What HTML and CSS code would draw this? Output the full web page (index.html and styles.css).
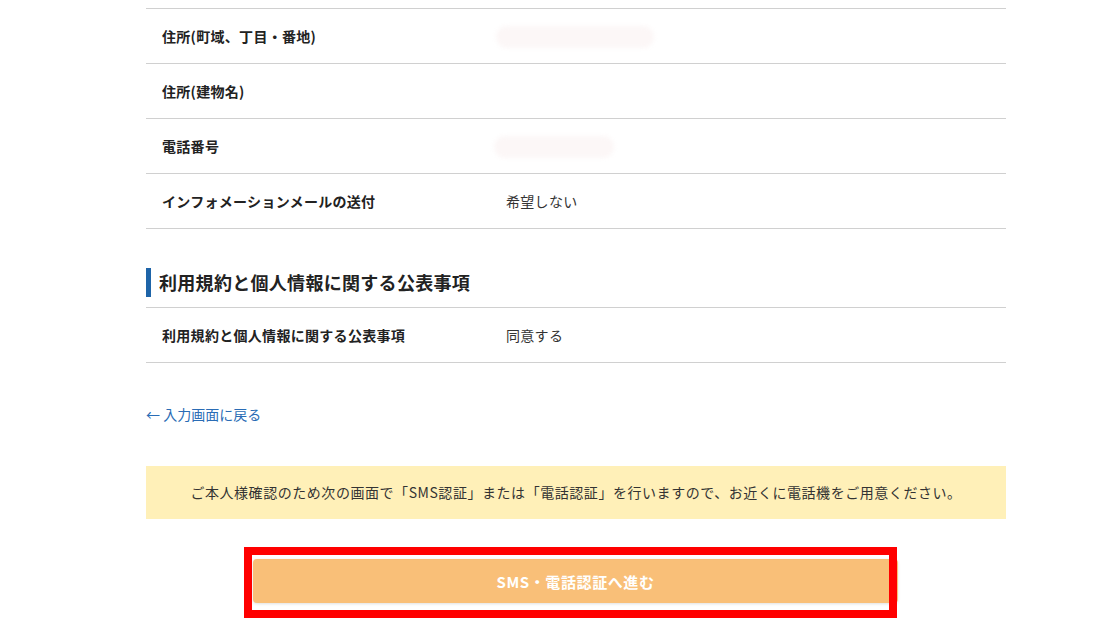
FILE: index.html
```html
<!DOCTYPE html>
<html lang="ja">
<head>
  <meta charset="UTF-8" />
  <meta name="viewport" content="width=device-width, initial-scale=1.0"/>
  <title>お申し込み内容の確認</title>
  <link rel="stylesheet" href="styles.css">
</head>
<body>
  <main class="page">
    <div class="confirm-table">
      <div class="row">
        <div class="label">住所(町域、丁目・番地)</div>
        <div class="value"><span class="masked masked-long"></span></div>
      </div>
      <div class="row">
        <div class="label">住所(建物名)</div>
        <div class="value"></div>
      </div>
      <div class="row">
        <div class="label">電話番号</div>
        <div class="value"><span class="masked masked-short"></span></div>
      </div>
      <div class="row">
        <div class="label">インフォメーションメールの送付</div>
        <div class="value">希望しない</div>
      </div>
    </div>

    <h2 class="section-title">利用規約と個人情報に関する公表事項</h2>
    <div class="confirm-table">
      <div class="row">
        <div class="label">利用規約と個人情報に関する公表事項</div>
        <div class="value">同意する</div>
      </div>
    </div>

    <a class="back-link" href="#">← 入力画面に戻る</a>

    <p class="notice">ご本人様確認のため次の画面で「SMS認証」または「電話認証」を行いますので、お近くに電話機をご用意ください。</p>

    <div class="submit-area">
      <div class="highlight">
        <button class="submit-btn" type="button">SMS・電話認証へ進む</button>
      </div>
    </div>
  </main>
</body>
</html>
```

FILE: styles.css
```css
* {
  margin: 0; padding: 0; box-sizing: border-box;
}
body {
  background: #fff;
  color: #333;
  font-family: Meiryo, "Noto Sans CJK JP", "Noto Sans", sans-serif;
  font-size: 14px;
  overflow: hidden;
}
.page {
  width: 860px;
  margin-left: 146px;
  padding-top: 8px;
}
.confirm-table {
  border-top: 1px solid #d0d0d0;
}
.row {
  display: flex;
  align-items: center;
  height: 55px;
  border-bottom: 1px solid #d0d0d0;
}
.label {
  width: 360px;
  padding-left: 16px;
  font-weight: bold;
  color: #222;
  letter-spacing: 0.3px;
}
.value {
  color: #333;
  letter-spacing: 0.3px;
}
.masked {
  display: inline-block;
  height: 22px;
  border-radius: 11px;
  background: #fcf7f7;
  filter: blur(2px);
  vertical-align: middle;
}
.masked-long {
  width: 158px;
  margin-left: -10px;
}
.masked-short {
  width: 120px;
  margin-left: -12px;
}
.section-title {
  margin-top: 39px;
  margin-bottom: 10px;
  border-left: 5px solid #1e64a8;
  padding-left: 8px;
  font-size: 18px;
  line-height: 29px;
  color: #222;
  letter-spacing: 0.3px;
}
.back-link {
  display: inline-block;
  margin-top: 41px;
  color: #2a6cb5;
  text-decoration: none;
  line-height: 20px;
}
.notice {
  margin-top: 42px;
  height: 53px;
  background: #fff0b8;
  text-align: center;
  line-height: 53px;
  color: #333;
  letter-spacing: 0.55px;
}
.submit-area {
  display: flex;
  padding-left: 98px;
  margin-top: 28px;
}
.highlight {
  position: relative;
  padding: 12px 0 14px 9px;
  width: 653px;
  height: 71px;
}
.highlight::after {
  content: "";
  position: absolute;
  top: 0; left: 0; right: 0; bottom: 0;
  border: 8px solid #ff0000;
  pointer-events: none;
}
.submit-btn {
  display: block;
  width: 645px;
  height: 44px;
  border: none;
  border-radius: 4px;
  background: #f9bf78;
  color: #fff;
  font-family: inherit;
  font-size: 15px;
  font-weight: bold;
  letter-spacing: 0.6px;
  box-shadow: 0 1px 3px rgba(0,0,0,0.12);
  cursor: pointer;
}
```
